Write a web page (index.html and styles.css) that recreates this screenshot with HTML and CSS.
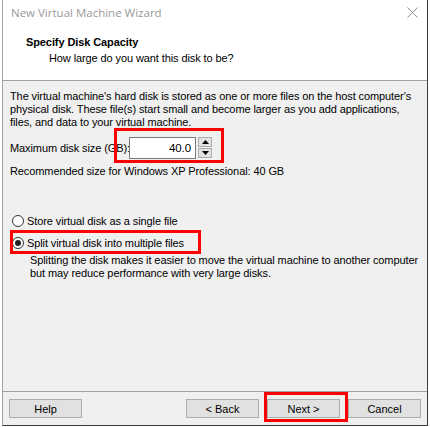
FILE: index.html
```html
<!DOCTYPE html>
<html>
<head>
<meta charset="utf-8">
<link rel="stylesheet" href="styles.css">
</head>
<body>
<div class="window">
  <div class="titlebar">
    <span class="title">New Virtual Machine Wizard</span>
    <svg class="close" width="11" height="11" viewBox="0 0 11 11"><path d="M0.5 0.5 L10.5 10.5 M10.5 0.5 L0.5 10.5" stroke="#8c8c8c" stroke-width="1" fill="none"/></svg>
  </div>
  <div class="header">
    <div class="h-title">Specify Disk Capacity</div>
    <div class="h-sub">How large do you want this disk to be?</div>
  </div>
  <div class="content">
    <p class="para">The virtual machine's hard disk is stored as one or more files on the host computer's<br>physical disk. These file(s) start small and become larger as you add applications,<br>files, and data to your virtual machine.</p>
    <div class="size-row">
      <span class="size-label">Maximum disk size (GB):</span>
      <div class="spin">
        <div class="spin-input">40.0</div>
        <div class="spin-btns">
          <div class="spin-btn"><svg width="7" height="4" viewBox="0 0 7 4"><path d="M3.5 0 L7 4 L0 4 Z" fill="#000"/></svg></div>
          <div class="spin-btn"><svg width="7" height="4" viewBox="0 0 7 4"><path d="M0 0 L7 0 L3.5 4 Z" fill="#000"/></svg></div>
        </div>
        <div class="mark mark-spin"></div>
      </div>
    </div>
    <div class="recommend">Recommended size for Windows XP Professional: 40 GB</div>
    <div class="radios">
      <div class="radio-row"><span class="radio"></span><span class="radio-label">Store virtual disk as a single file</span></div>
      <div class="radio-row split"><span class="radio checked"></span><span class="radio-label">Split virtual disk into multiple files</span><div class="mark mark-radio"></div></div>
      <p class="desc">Splitting the disk makes it easier to move the virtual machine to another computer<br>but may reduce performance with very large disks.</p>
    </div>
  </div>
  <div class="footer">
    <button class="btn">Help</button>
    <div class="nav">
      <button class="btn">&lt; Back</button>
      <div class="next-wrap"><button class="btn">Next &gt;</button><div class="mark mark-next"></div></div>
      <button class="btn">Cancel</button>
    </div>
  </div>
</div>
</body>
</html>
```
FILE: styles.css
```css
* { box-sizing: border-box; }
html, body { margin: 0; padding: 0; background: #fff; }
body {
  width: 430px;
  height: 427px;
  overflow: hidden;
  font-family: "Liberation Sans", Arial, sans-serif;
  font-size: 11px;
  letter-spacing: -0.1px;
  color: #000;
}
.window {
  margin-left: 2px;
  width: 426px;
  height: 426px;
  border-left: 1px solid #a0a0a0;
  border-right: 1px solid #3a3a3a;
  border-bottom: 1px solid #3a3a3a;
  display: flex;
  flex-direction: column;
}
.titlebar {
  height: 26px;
  background: #fff;
  display: flex;
  align-items: center;
  justify-content: space-between;
  padding: 0 9px 0 8px;
}
.title {
  font-family: "Open Sans", "Noto Sans", sans-serif;
  font-size: 11.5px;
  letter-spacing: 0;
  color: #9a9a9a;
  margin-top: -1px;
}
.close { display: block; margin-top: -2px; }
.header {
  height: 55px;
  background: #fff;
  border-bottom: 1px solid #a0a0a0;
  padding: 8px 0 0 23px;
}
.h-title { font-weight: bold; line-height: 16px; }
.h-sub { padding-left: 23px; line-height: 16px; margin-top: 0; }
.content {
  flex: 1;
  background: #f0f0f0;
  padding: 9px 0 0 7px;
  border-bottom: 1px solid #a0a0a0;
}
.para { margin: 0; line-height: 13px; white-space: nowrap; }
.size-row {
  display: flex;
  align-items: center;
  margin-top: 8px;
}
.size-label { width: 119px; white-space: nowrap; }
.spin { position: relative; display: flex; gap: 2px; }
.spin-input {
  width: 67px;
  height: 22px;
  background: #fff;
  border: 1px solid #7a7a7a;
  text-align: right;
  padding: 4px 4px 0 0;
  font-size: 11.5px;
}
.spin-btns { display: flex; flex-direction: column; gap: 1px; }
.spin-btn {
  width: 14px;
  height: 10px;
  background: #e1e1e1;
  border: 1px solid #adadad;
  display: flex;
  align-items: center;
  justify-content: center;
}
.spin-btn svg { display: block; }
.mark {
  position: absolute;
  border: 3px solid #ff0000;
  pointer-events: none;
}
.mark-spin { left: -15px; top: -9px; width: 110px; height: 35px; }
.recommend { margin-top: 6px; line-height: 13px; }
.radios { margin-top: 36px; }
.radio-row {
  position: relative;
  display: flex;
  align-items: center;
  height: 13px;
  margin-bottom: 9px;
  padding-left: 2px;
}
.radio {
  width: 12px;
  height: 12px;
  border: 1px solid #333;
  border-radius: 50%;
  background: #fff;
  margin-right: 3px;
  display: flex;
  align-items: center;
  justify-content: center;
}
.radio.checked::after {
  content: "";
  width: 6px;
  height: 6px;
  border-radius: 50%;
  background: #222;
}
.mark-radio { left: 0; top: -6px; width: 191px; height: 24px; }
.desc { margin: -4px 0 0 20px; line-height: 13px; white-space: nowrap; }
.footer {
  height: 33px;
  background: #f0f0f0;
  display: flex;
  align-items: flex-start;
  justify-content: space-between;
  padding: 7px 6px 0 6px;
}
.nav { display: flex; gap: 8px; }
.next-wrap { position: relative; }
.btn {
  display: block;
  width: 73px;
  height: 19px;
  margin: 0;
  padding: 0;
  background: #e1e1e1;
  border: 1px solid #adadad;
  font-family: "Liberation Sans", Arial, sans-serif;
  font-size: 11px;
  color: #000;
}
.mark-next { left: -3px; top: -7px; width: 84px; height: 30px; }
```
